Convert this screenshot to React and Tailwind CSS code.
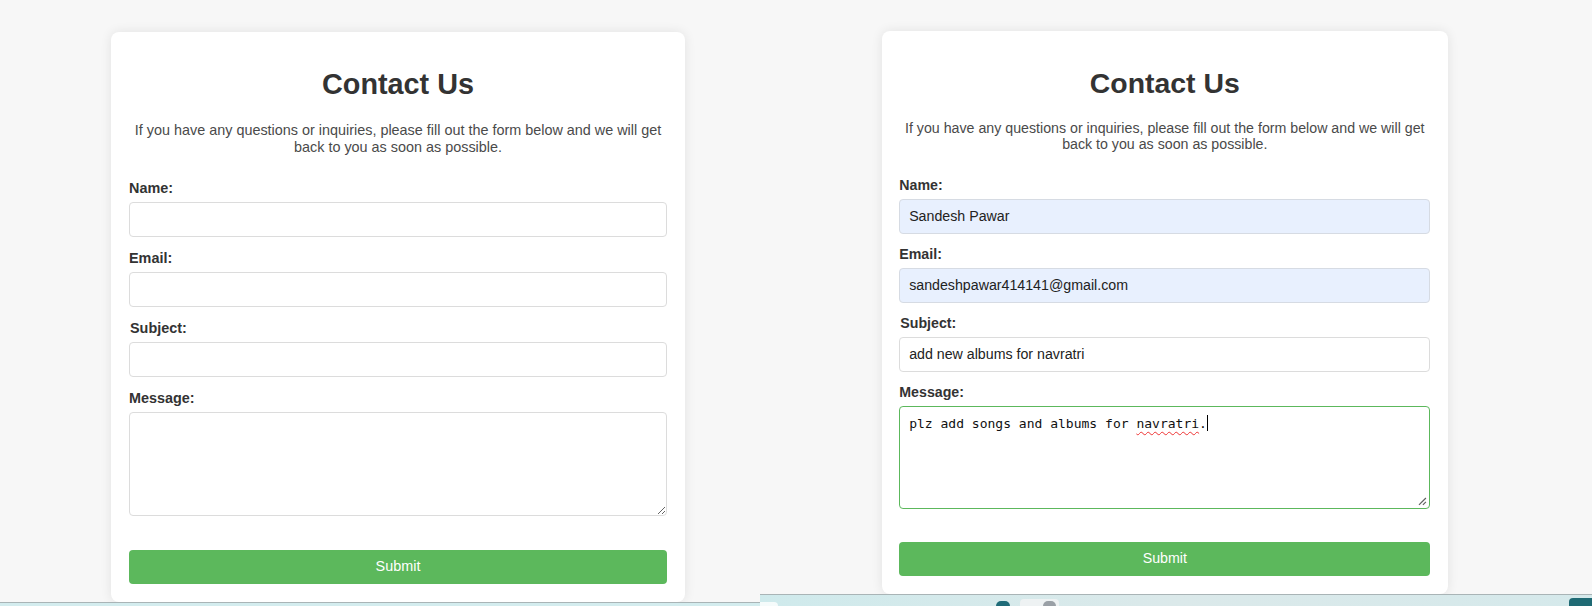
import React from "react";

const SANS = "font-['Liberation_Sans',Arial,sans-serif]";

function Label({ children }) {
  return (
    <label className="block text-[14.4px] leading-[17px] font-bold text-[#333] mb-[5px]">
      {children}
    </label>
  );
}

function TextInput({ value, autofill }) {
  return (
    <input
      type="text"
      readOnly
      defaultValue={value}
      className={
        "block w-full h-[35px] px-[9px] mb-[13px] border rounded-[4px] text-[14.4px] text-[#222] outline-none " +
        SANS +
        (autofill ? " bg-[#e8f0fe] border-[#d6dbe3]" : " bg-white border-[#dcdcdc]")
      }
    />
  );
}

function Grip() {
  return (
    <svg
      className="absolute right-[2px] bottom-[2px]"
      width="9"
      height="9"
      viewBox="0 0 9 9"
    >
      <path d="M8 1 L1 8" stroke="#5f5f5f" strokeWidth="1.2" />
      <path d="M8 5 L5 8" stroke="#5f5f5f" strokeWidth="1.2" />
    </svg>
  );
}

function ContactCard({ filled }) {
  return (
    <div
      className={
        "w-[574px] h-[570px] rounded-[8px] bg-white shadow-[0_0_12px_rgba(0,0,0,0.09)] px-[18px] pt-[36px] pb-[18px] flex flex-col " +
        SANS
      }
    >
      <h2 className="text-center text-[28.8px] leading-[33px] font-bold text-[#333]">
        Contact Us
      </h2>
      <p className="mt-[21px] text-center text-[14.4px] leading-[16.6px] text-[#4a4a4a]">
        If you have any questions or inquiries, please fill out the form below
        and we will get back to you as soon as possible.
      </p>
      <form className="mt-[25px] flex flex-col" onSubmit={(e) => e.preventDefault()}>
        <Label>Name:</Label>
        <TextInput value={filled ? "Sandesh Pawar" : ""} autofill={filled} />
        <Label>Email:</Label>
        <TextInput
          value={filled ? "sandeshpawar414141@gmail.com" : ""}
          autofill={filled}
        />
        <span className="ml-[1px]">
          <Label>Subject:</Label>
        </span>
        <TextInput value={filled ? "add new albums for navratri" : ""} />
        <Label>Message:</Label>
        {filled ? (
          <div
            role="textbox"
            className="relative h-[104px] border border-[#5cb85c] rounded-[4px] px-[9px] pt-[8px] bg-white font-['DejaVu_Sans_Mono','Liberation_Mono',monospace] text-[13.2px] leading-[16px] text-[#111] whitespace-pre"
          >
            {"plz add songs and albums for "}
            <span className="underline decoration-wavy decoration-[#e33] decoration-1 underline-offset-[3px]">
              navratri
            </span>
            .
            <span className="inline-block w-[1px] h-[16px] bg-black align-[-3px]" />
            <Grip />
          </div>
        ) : (
          <textarea
            className="block w-full h-[104px] border border-[#dcdcdc] rounded-[4px] bg-white outline-none"
            defaultValue=""
          />
        )}
        <button
          type="submit"
          className={
            "mt-[34px] w-full h-[34px] rounded-[4px] bg-[#5cb85c] text-white text-[14.4px] " +
            SANS
          }
        >
          Submit
        </button>
      </form>
    </div>
  );
}

export default function App() {
  return (
    <div className="w-[1592px] h-[606px] flex overflow-hidden bg-[#f7f7f7]">
      {/* left screenshot */}
      <div className="w-[760px] flex flex-col">
        <div className="h-[602px] pl-[111px] pt-[32px]">
          <ContactCard filled={false} />
        </div>
        <div className="flex-1 border-t border-[#a9b4b6] bg-[#d3ecee]" />
      </div>

      {/* right screenshot */}
      <div className="flex-1 flex flex-col">
        <div className="h-[594px] pl-[121.5px] pt-[31px]">
          <div className="[zoom:0.987]">
            <ContactCard filled />
          </div>
        </div>
        <div className="flex-1 border-t border-[#a9b4b6] bg-gradient-to-r from-[#cfeaec] via-[#dbe9ea] to-[#d5e9eb] flex items-end">
          <div className="w-[18px] h-[4px] rounded-tr-[6px] bg-white/80" />
          <div className="ml-[218px] w-[14px] h-[5px] rounded-t-full bg-[#1f6b78]" />
          <div className="ml-[10px] w-[39px] h-[7px] rounded-t-[4px] bg-[#eef2f3] flex items-end pl-[23px]">
            <div className="w-[13px] h-[5px] rounded-t-full bg-[#9aa0a6]" />
          </div>
          <div className="flex-1" />
          <div className="w-[23px] h-[8px] rounded-tl-[4px] bg-[#1f6a74]" />
        </div>
      </div>
    </div>
  );
}
